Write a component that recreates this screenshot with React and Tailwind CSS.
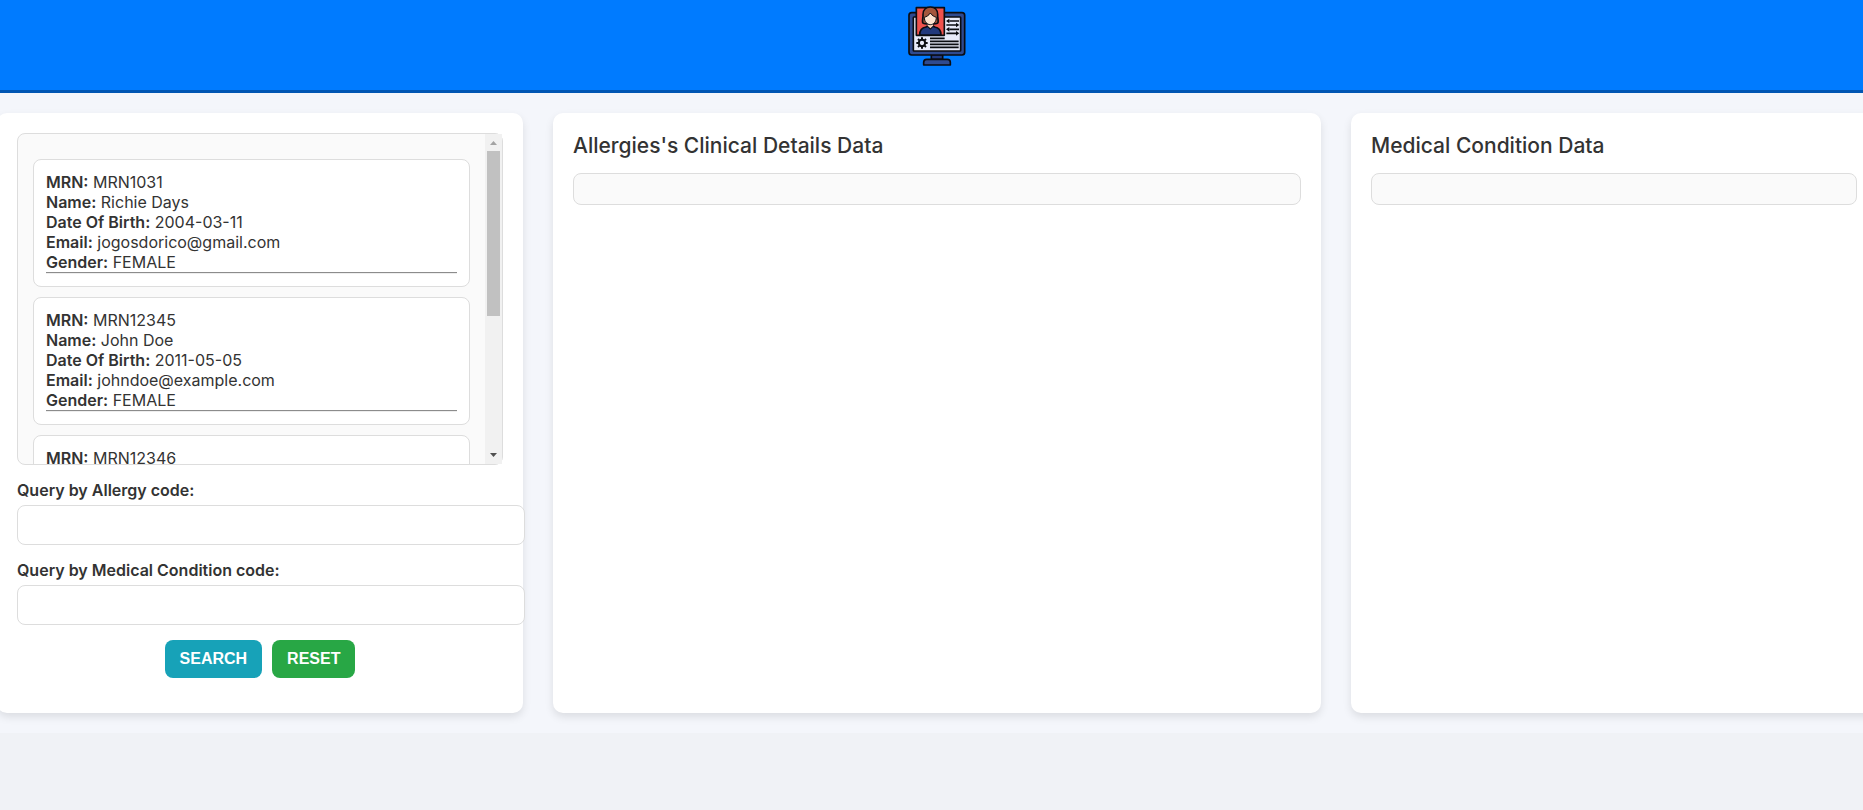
import React from "react";

const patients = [
  { MRN: "MRN1031", Name: "Richie Days", "Date Of Birth": "2004-03-11", Email: "jogosdorico@gmail.com", Gender: "FEMALE" },
  { MRN: "MRN12345", Name: "John Doe", "Date Of Birth": "2011-05-05", Email: "johndoe@example.com", Gender: "FEMALE" },
  { MRN: "MRN12346" },
];

function Logo() {
  return (
    <svg className="h-15 w-15" viewBox="51 18 180 180" role="img" aria-label="Patient records">
      <g stroke="#0b0d12" strokeWidth="5" strokeLinejoin="round">
        <path d="M124 164h34v14h-34z" fill="#233a80" />
        <path d="M110 178h62c6 0 9 4 9 9v8h-80v-8c0-5 3-9 9-9z" fill="#2f4a8f" />
        <rect x="57" y="38" width="167" height="127" rx="8" fill="#2f4a8f" />
        <rect x="70" y="51" width="142" height="102" rx="2" fill="#e8ebfa" />
        <rect x="79" y="23" width="84" height="83" fill="#f0524d" />
        <path d="M98 68c-2-8 2-16 1-24 0-15 10-23 22-23s22 8 22 23c-1 8 3 16 1 24-4 5-42 5-46 0z" fill="#a4563c" />
        <path d="M89 105c0-15 7-22 19-24l5-3 8 8 8-8 5 3c12 2 19 9 19 24z" fill="#22397c" />
        <path d="M113 68h16v9l-8 8-8-8z" fill="#fbd5bd" stroke="none" />
        <path d="M103 52c6-2 13-5 18-13 5 8 12 11 18 13 0 13-8 22-18 22s-18-9-18-22z" fill="#fde3d0" strokeWidth="3" />
      </g>
      <g stroke="#0b0d12" strokeWidth="5" fill="none">
        <path d="M178 63h29M169 75h29M178 88h29M169 100h29" />
        <path d="M120 115h44M120 124h86M120 133h86M120 142h86" strokeWidth="5" />
        <circle cx="96" cy="129" r="9.5" strokeWidth="6" />
        <path d="M96 112v6M96 140v6M79 129h6M107 129h6M84 117l4 4M104 137l4 4M108 117l-4 4M88 137l-4 4" strokeWidth="6" />
      </g>
      <path d="M168 63l10-7v14zM208 75l-10-7v14zM168 88l10-7v14zM208 100l-10-7v14z" fill="#0b0d12" />
    </svg>
  );
}

function PatientList() {
  return (
    <div className="flex h-[332px] rounded-lg border border-[#ddd] bg-[#fafafa]">
      <div className="min-w-0 flex-1 overflow-y-auto px-[15px] pt-[25px] [scrollbar-width:none]">
        {patients.map((patient) => (
          <div key={patient.MRN} className="mb-[10px] min-h-[128px] rounded-lg border border-[#ddd] bg-white p-3">
            {Object.entries(patient).map(([label, value]) => (
              <div key={label}>
                <strong className="font-semibold">{label}:</strong> {value}
              </div>
            ))}
            <hr className="h-[2px] border-t border-b border-t-[#8c8c8c] border-b-[#eee]" />
          </div>
        ))}
      </div>
      <div aria-hidden="true" className="flex w-[17px] flex-col items-center bg-[#f1f1f1]">
        <svg className="h-[17px] w-[17px]" viewBox="0 0 17 17">
          <path d="M5 11h7L8.500 7z" fill="#a3a3a3" />
        </svg>
        <div className="h-[165px] w-[13px] bg-[#c1c1c1]" />
        <svg className="mt-auto h-[17px] w-[17px]" viewBox="0 0 17 17">
          <path d="M5 6h7L8.500 10z" fill="#505050" />
        </svg>
      </div>
    </div>
  );
}

function QueryInput({ id, label }) {
  return (
    <div className="mt-[15px]">
      <label htmlFor={id} className="block font-semibold">
        {label}
      </label>
      <input
        id={id}
        type="text"
        className="mt-[5px] block h-10 w-[calc(100%+22px)] rounded-lg border border-[#ddd] bg-white px-[10px]"
      />
    </div>
  );
}

function Card({ children }) {
  return (
    <div className="min-h-[600px] rounded-[10px] bg-white p-5 shadow-[0_4px_8px_rgba(0,0,0,0.1)]">{children}</div>
  );
}

function ResultCard({ title }) {
  return (
    <Card>
      <h2 className="text-[21px] leading-[26px] font-medium">{title}</h2>
      <div className="mt-[14px] h-8 rounded-lg border border-[#ddd] bg-[#fafafa]" />
    </Card>
  );
}

export default function App() {
  return (
    <div className="min-h-screen overflow-x-hidden bg-[#f0f2f6] font-['Inter',sans-serif] text-base leading-5 text-[#333]">
      <header className="flex h-[93px] justify-center border-b-[3px] border-[#0056b3] bg-[#007bff] pt-1.5 pl-[11px]">
        <Logo />
      </header>
      <main className="overflow-hidden bg-[#f4f6fb] py-5">
        <div className="-mr-[14px] -ml-[3px] grid grid-cols-[minmax(0,526fr)_minmax(0,768fr)_minmax(0,526fr)] gap-[30px]">
          <Card>
            <PatientList />
            <form onSubmit={(e) => e.preventDefault()}>
              <QueryInput id="allergy-code" label="Query by Allergy code:" />
              <QueryInput id="condition-code" label="Query by Medical Condition code:" />
              <div className="mt-[15px] flex justify-center gap-[10px] font-['Liberation_Sans',Arial,sans-serif] font-bold text-white">
                <button type="submit" className="h-[38px] rounded-lg bg-[#17a2b8] px-[15px]">
                  SEARCH
                </button>
                <button type="reset" className="h-[38px] rounded-lg bg-[#28a745] px-[15px]">
                  RESET
                </button>
              </div>
            </form>
          </Card>
          <ResultCard title="Allergies's Clinical Details Data" />
          <ResultCard title="Medical Condition Data" />
        </div>
      </main>
    </div>
  );
}
